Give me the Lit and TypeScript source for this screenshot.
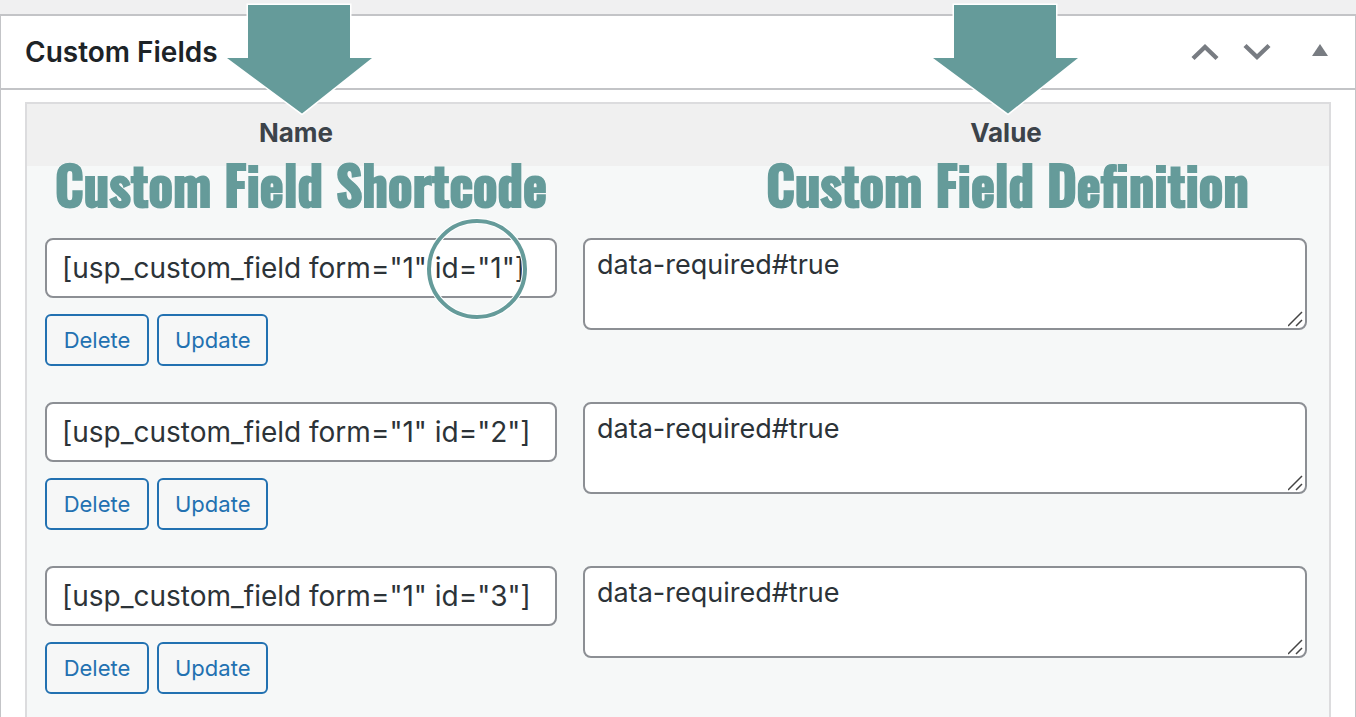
import { LitElement, html, css, svg } from "lit";
import { customElement, state } from "lit/decorators.js";

interface Field {
  id: number;
  key: string;
  value: string;
}

@customElement("field-arrow")
class FieldArrow extends LitElement {
  static styles = css`
    :host {
      display: block;
      pointer-events: none;
    }
    .arrow {
      display: block;
      width: 150px;
      height: 114px;
    }
    .arrow path {
      fill: #659b9a;
      stroke: #fff;
      stroke-width: 3;
      paint-order: stroke;
    }
  `;

  render() {
    return html`<svg class="arrow" viewBox="0 0 150 114" aria-hidden="true">
      <path d="M23 3H125V56H147L77 111.500L2 56H23Z"></path>
    </svg>`;
  }
}

@customElement("app-root")
export class AppRoot extends LitElement {
  @state() private fields: Field[] = [1, 2, 3].map((id) => ({
    id,
    key: `[usp_custom_field form="1" id="${id}"]`,
    value: "data-required#true",
  }));

  static styles = css`
    :host {
      display: flex;
      flex-direction: column;
      box-sizing: border-box;
      min-height: 100vh;
      padding-top: 14px;
      background: #f0f0f1;
      color: #2c3338;
      font-family: Inter, "Liberation Sans", sans-serif;
      font-size: 28px;
    }
    * {
      box-sizing: border-box;
    }
    .panel {
      position: relative;
      flex: 1;
      display: flex;
      flex-direction: column;
      background: #fff;
      border: solid #c3c4c7;
      border-width: 2px 1px 0;
    }
    .head {
      display: flex;
      align-items: center;
      height: 74px;
      padding: 0 19px 0 24px;
      border-bottom: 2px solid #c3c4c7;
    }
    h2 {
      flex: 1;
      margin: 0;
      font-size: 28px;
      font-weight: 600;
      line-height: 40px;
      color: #1d2327;
    }
    .order {
      display: grid;
      place-items: center;
      width: 52px;
      height: 52px;
      padding: 0;
      border: 0;
      background: none;
      color: #787c82;
    }
    .order svg {
      display: block;
    }
    .toggle {
      width: 32px;
      margin-left: 21px;
    }
    .box {
      flex: 1;
      margin: 12px 24px 0;
      border: 2px solid #dcdcde;
      border-bottom: 0;
      background: #f6f8f8;
    }
    table {
      width: 100%;
      border-collapse: collapse;
      table-layout: fixed;
    }
    .name-col {
      width: 538px;
    }
    th {
      height: 62px;
      padding: 0 0 4px;
      background: #f0f0f0;
      color: #3c434a;
      font-size: 26px;
      font-weight: 700;
      line-height: 34px;
    }
    th.value {
      padding-left: 118px;
    }
    td {
      padding: 20px 22px 16px 18px;
      vertical-align: top;
    }
    td.name {
      padding-right: 8px;
    }
    tbody tr:first-child td {
      padding-top: 72px;
    }
    input,
    textarea {
      display: block;
      width: 100%;
      margin: 0;
      border: 2px solid #8c8f94;
      border-radius: 8px;
      background: #fff;
      color: #2c3338;
      font: inherit;
      outline: 0;
    }
    input {
      height: 60px;
      padding: 0 15px;
    }
    textarea {
      height: 92px;
      padding: 4px 12px;
      font-size: 27px;
      line-height: 42px;
      resize: none;
      overflow: hidden;
    }
    .area {
      position: relative;
    }
    .grip {
      position: absolute;
      right: 3px;
      bottom: 3px;
    }
    .actions {
      display: flex;
      gap: 8px;
      margin-top: 16px;
    }
    .btn {
      height: 52px;
      min-width: 104px;
      padding: 0 16px;
      border: 2px solid #2271b1;
      border-radius: 6px;
      background: #f6f7f7;
      color: #2271b1;
      font: inherit;
      font-size: 22px;
    }
    .mark {
      position: absolute;
      z-index: 1;
    }
    .arrow-name {
      top: -14px;
      left: 224px;
    }
    .arrow-value {
      top: -14px;
      right: 274px;
    }
    .title {
      margin: 0;
      color: #659b9a;
      font-family: Oswald, "Liberation Sans Narrow", "Liberation Sans", sans-serif;
      font-size: 52px;
      font-weight: 600;
      line-height: 48px;
      white-space: nowrap;
      -webkit-text-stroke: 2px #659b9a;
      text-shadow: 1px 1px #fff, -1px 1px #fff, 1px -1px #fff, -1px -1px #fff;
      pointer-events: none;
    }
    .title-name {
      top: 144px;
      left: 54px;
    }
    .title-value {
      top: 144px;
      right: 106px;
    }
    .ring {
      top: 201px;
      left: 424px;
      pointer-events: none;
    }
    .ring circle {
      fill: none;
    }
  `;

  private row(f: Field) {
    return html`<tr>
      <td class="name">
        <input type="text" aria-label="Name" .value=${f.key} />
        <div class="actions">
          <button class="btn" type="button">Delete</button>
          <button class="btn" type="button">Update</button>
        </div>
      </td>
      <td>
        <div class="area">
          <textarea aria-label="Value" .value=${f.value}></textarea>
          <svg class="grip" width="16" height="16" viewBox="0 0 16 16" aria-hidden="true">
            <path d="M0 15L14 1M8 15L14 9" fill="none" stroke="#444" stroke-width="1.500"></path>
          </svg>
        </div>
      </td>
    </tr>`;
  }

  private chevron(d: string) {
    return html`<svg width="28" height="18" viewBox="0 0 28 18" aria-hidden="true">
      ${svg`<path d=${d} fill="none" stroke="currentColor" stroke-width="4.400"></path>`}
    </svg>`;
  }

  render() {
    return html`<section class="panel">
      <header class="head">
        <h2>Custom Fields</h2>
        <button class="order" type="button" aria-label="Move up">${this.chevron("M2 15.500L14 4L26 15.500")}</button>
        <button class="order" type="button" aria-label="Move down">${this.chevron("M2 2.500L14 14L26 2.500")}</button>
        <button class="order toggle" type="button" aria-label="Toggle panel">
          <svg width="16" height="16" viewBox="0 0 16 16" aria-hidden="true">
            <path d="M8 0L16 12H0Z" fill="currentColor"></path>
          </svg>
        </button>
      </header>
      <div class="box">
        <table>
          <colgroup>
            <col class="name-col" />
            <col />
          </colgroup>
          <thead>
            <tr>
              <th scope="col">Name</th>
              <th scope="col" class="value">Value</th>
            </tr>
          </thead>
          <tbody>
            ${this.fields.map((f) => this.row(f))}
          </tbody>
        </table>
      </div>
      <field-arrow class="mark arrow-name"></field-arrow>
      <field-arrow class="mark arrow-value"></field-arrow>
      <p class="mark title title-name">Custom Field Shortcode</p>
      <p class="mark title title-value">Custom Field Definition</p>
      <svg class="mark ring" width="104" height="104" viewBox="0 0 104 104" aria-hidden="true">
        <circle cx="52" cy="52" r="48" stroke="#fff" stroke-width="6"></circle>
        <circle cx="52" cy="52" r="48" stroke="#659b9a" stroke-width="4"></circle>
      </svg>
    </section>`;
  }
}
